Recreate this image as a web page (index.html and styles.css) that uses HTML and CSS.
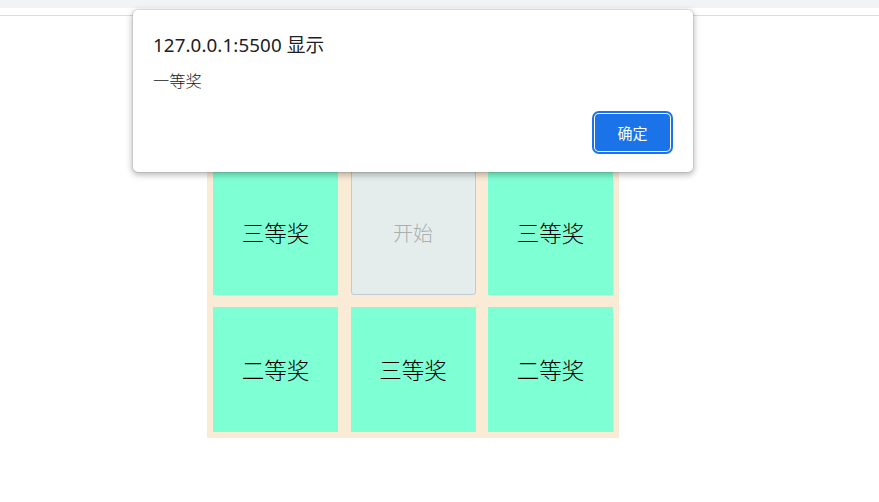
FILE: index.html
```html
<!DOCTYPE html>
<html lang="zh-CN">
<head>
<meta charset="utf-8">
<title>抽奖</title>
<link rel="stylesheet" href="styles.css">
</head>
<body>
<div class="toolbar-edge"></div>
<div class="toolbar-gap"></div>
<main class="page">
  <div class="board">
    <div class="cell">一等奖</div>
    <div class="cell">二等奖</div>
    <div class="cell">三等奖</div>
    <div class="cell">三等奖</div>
    <button class="start" disabled>开始</button>
    <div class="cell">三等奖</div>
    <div class="cell">二等奖</div>
    <div class="cell">三等奖</div>
    <div class="cell">二等奖</div>
  </div>
</main>
<div class="dialog" role="alertdialog">
  <div class="dialog-title">127.0.0.1:5500 显示</div>
  <div class="dialog-msg">一等奖</div>
  <div class="dialog-footer">
    <button class="ok">确定</button>
  </div>
</div>
</body>
</html>
```
FILE: styles.css
```css
html, body {
  margin: 0;
  padding: 0;
  background: #ffffff;
  height: 100%;
}
body {
  font-family: "Noto Sans", "Noto Sans CJK SC", sans-serif;
  position: relative;
  overflow: hidden;
}
.toolbar-edge {
  height: 8px;
  background: #f1f3f4;
}
.toolbar-gap {
  height: 7px;
  border-bottom: 1px solid #dadce0;
  background: #ffffff;
}
.page {
  padding: 11px 0 0 207px;
}
.board {
  display: grid;
  grid-template-columns: repeat(3, 125px);
  grid-auto-rows: 125px;
  column-gap: 12.5px;
  row-gap: 12px;
  padding: 6px;
  width: max-content;
  background: #faebd7;
}
.cell {
  background: #7fffd4;
  display: flex;
  align-items: center;
  justify-content: center;
  padding-bottom: 2px;
  box-sizing: border-box;
  font-family: "Noto Sans CJK SC", sans-serif;
  font-weight: 300;
  font-size: 22.5px;
  color: #000000;
}
.start {
  margin: 0;
  padding: 0;
  box-sizing: border-box;
  background: #e4ecec;
  border: 1px solid #bfccd3;
  border-radius: 3px;
  color: #a9afad;
  font-family: "Noto Sans CJK SC", sans-serif;
  font-weight: 300;
  font-size: 20px;
}
.dialog {
  position: absolute;
  left: 133px;
  top: 10px;
  width: 560px;
  box-sizing: border-box;
  padding: 23px 20px 21px 20px;
  background: #ffffff;
  border-radius: 5px;
  box-shadow: 0 0 0 1px rgba(0, 0, 0, 0.07), 0 2px 6px 1px rgba(0, 0, 0, 0.28);
  color: #202124;
}
.dialog-title {
  font-size: 18.75px;
  line-height: 24px;
  letter-spacing: 0.1px;
}
.dialog-msg {
  margin-top: 13px;
  font-family: "Noto Sans CJK SC", sans-serif;
  font-weight: 300;
  font-size: 16.25px;
  line-height: 20px;
}
.dialog-footer {
  margin-top: 24px;
  display: flex;
  justify-content: flex-end;
  padding-right: 3px;
}
.ok {
  width: 75px;
  height: 37px;
  margin: 0;
  padding: 0;
  border: none;
  border-radius: 4px;
  background: #1a73e8;
  color: #ffffff;
  font-family: "Noto Sans CJK SC", sans-serif;
  font-size: 15px;
  box-shadow: 0 0 0 1px #ffffff, 0 0 0 3px #1a73e8;
}
```
